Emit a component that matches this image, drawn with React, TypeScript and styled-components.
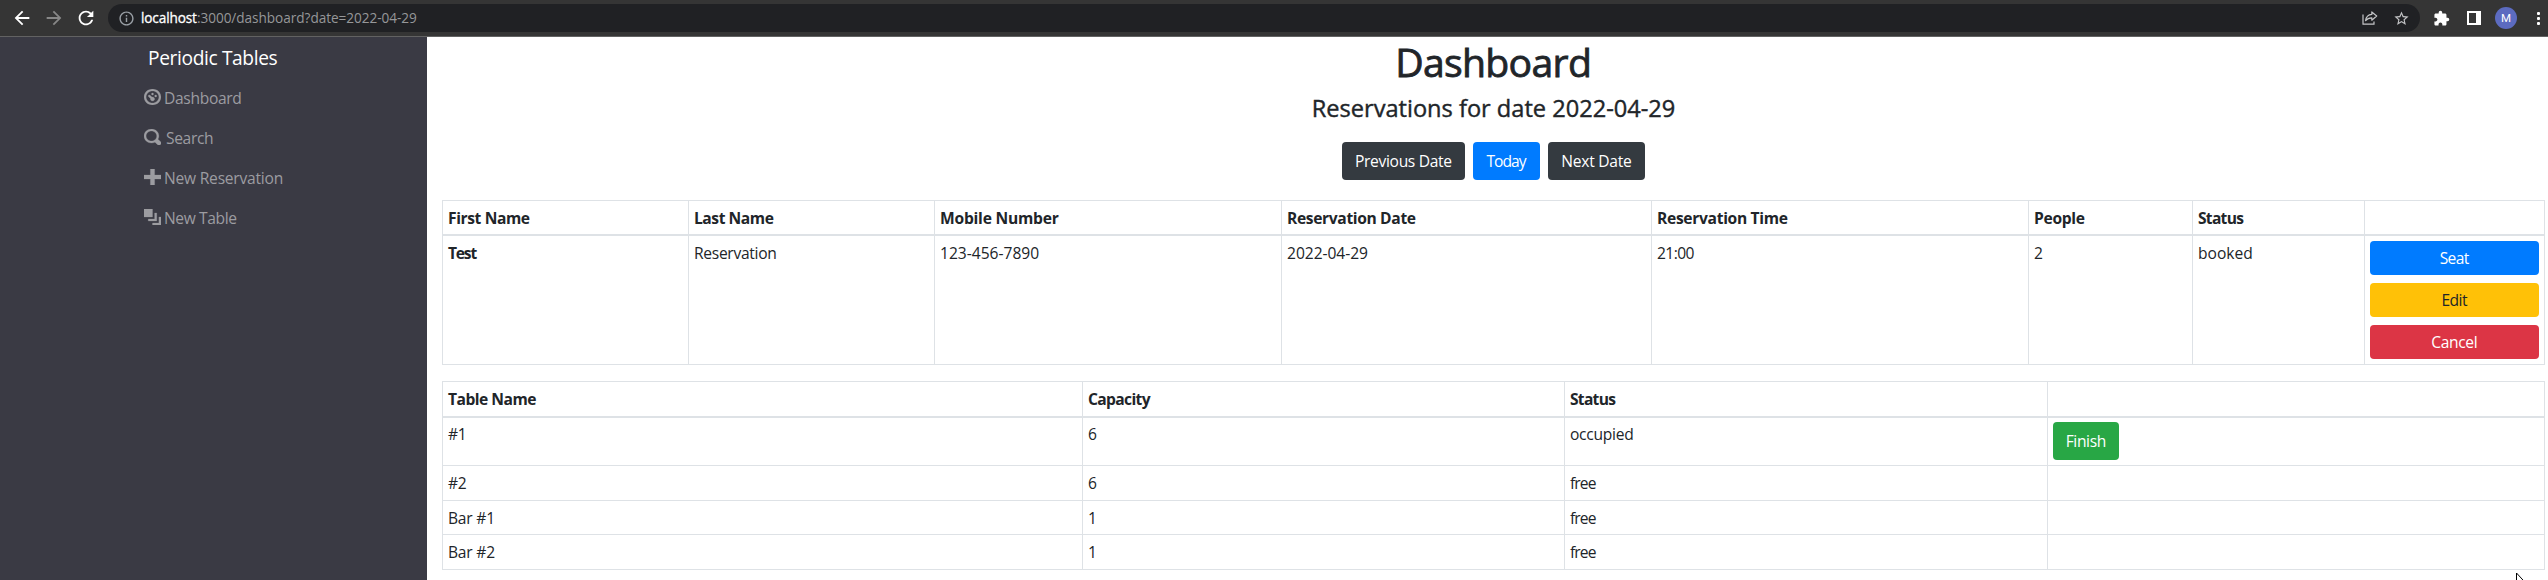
import React from "react";
import styled, { createGlobalStyle, css } from "styled-components";
import { MdArrowBack, MdArrowForward, MdRefresh, MdInfoOutline, MdStarOutline, MdExtension } from "react-icons/md";

const GlobalStyle = createGlobalStyle`
  *, *::before, *::after { box-sizing: border-box; }
  body {
    margin: 0;
    background: #fff;
    color: #212529;
    font: 400 15.6px/24px "Open Sans", "Noto Sans", sans-serif;
    overflow: hidden;
  }
`;

const Page = styled.div`
  position: relative;
  display: flex;
  flex-direction: column;
  height: 580px;
  overflow: hidden;
`;

const Track = styled.span<{ $t?: number }>`
  letter-spacing: ${(p) => p.$t ?? 0}px;
  margin-right: ${(p) => -(p.$t ?? 0)}px;
  white-space: nowrap;
`;

/* Browser toolbar */
const Toolbar = styled.header`
  display: flex;
  align-items: center;
  flex: none;
  height: 37px;
  padding: 0 5px 0 11px;
  background: #353535;
  border-bottom: 1px solid #626262;
  color: #fff;
  svg { display: block; flex: none; }
`;

const NavButtons = styled.div`
  display: flex;
  gap: 10px;
  width: 97px;
  svg:nth-child(2) { color: #878787; }
`;

const AddressBar = styled.div`
  display: flex;
  align-items: center;
  flex: 1;
  height: 28px;
  padding: 0 10px;
  border-radius: 14px;
  background: #202124;
  color: #9aa0a6;
`;

const Url = styled.div`
  flex: 1;
  margin-left: 6px;
  font-size: 13.6px;
  line-height: 20px;
  color: #969799;
  b { font-weight: 400; color: #fff; -webkit-text-stroke: 0.3px #fff; }
`;

const AddressActions = styled.div`
  display: flex;
  align-items: center;
  gap: 15px;
  color: #c3c4c6;
`;

const Extensions = styled.div`
  display: flex;
  align-items: center;
  height: 28px;
  width: 112px;
  margin-left: 11px;
  padding-left: 2px;
`;

const PanelIcon = styled.span`
  width: 14px;
  height: 14px;
  margin-left: 17px;
  border: solid #fff;
  border-width: 2px 5px 2px 2px;
`;

const Avatar = styled.span`
  width: 22px;
  height: 22px;
  margin-left: 14px;
  border-radius: 50%;
  background: #5c6bc0;
  font: 400 11.5px/22px Roboto, sans-serif;
  text-align: center;
`;

const Dots = styled.span`
  display: grid;
  gap: 2px;
  margin-left: 20px;
  i { width: 3px; height: 3px; border-radius: 1px; background: #fff; }
`;

/* Page shell */
const Shell = styled.div`
  display: flex;
  flex: 1;
`;

const Sidebar = styled.nav`
  width: 427px;
  flex: none;
  padding: 6px 0 0 144px;
  background: #3a3a44;
  color: #9c9ca1;
`;

const Brand = styled.div`
  height: 35px;
  padding-left: 4px;
  font-size: 19.2px;
  line-height: 30px;
  color: #fff;
`;

const NavItem = styled.a<{ $gap: number }>`
  display: flex;
  gap: ${(p) => p.$gap}px;
  height: 40px;
  padding: 8px 0;
  svg {
    width: 17px;
    height: 16px;
    margin-top: 3px;
    fill: currentColor;
    stroke: currentColor;
    stroke-width: 0.12;
  }
`;

const Main = styled.main`
  flex: 1;
  padding: 1px 3px 0 15px;
`;

const Title = styled.h1`
  margin: 0 0 8px;
  font-size: 39.2px;
  font-weight: 500;
  line-height: 48px;
  text-align: center;
  -webkit-text-stroke: 0.8px #212529;
`;

const Subtitle = styled.h4`
  margin: 0;
  height: 48px;
  font-size: 23.6px;
  font-weight: 500;
  line-height: 29px;
  text-align: center;
  -webkit-text-stroke: 0.4px #212529;
`;

const tones = {
  dark: "#343a40",
  primary: "#007bff",
  warning: "#ffc107",
  danger: "#dc3545",
  success: "#28a745",
};

const Button = styled.button<{ $tone: keyof typeof tones; $width?: number; $block?: boolean }>`
  display: flex;
  align-items: center;
  justify-content: center;
  height: 38px;
  width: ${(p) => p.$width}px;
  padding: 0;
  border: 0;
  border-radius: 4px;
  background: ${(p) => tones[p.$tone]};
  color: ${(p) => (p.$tone === "warning" ? "#212529" : "#fff")};
  font: inherit;
  ${(p) => p.$block && css`
    width: 169px;
    height: 34px;
  `}
`;

const DateNav = styled.div`
  display: flex;
  justify-content: center;
  gap: 8px;
  margin-bottom: 20px;
`;

const Actions = styled.div`
  display: flex;
  flex-direction: column;
  gap: 8px;
`;

const Table = styled.table`
  width: 2103px;
  table-layout: fixed;
  border-collapse: separate;
  border-spacing: 0;
  border: solid #dee2e6;
  border-width: 1px 0 0 1px;
  margin-bottom: 16px;
  th, td {
    padding: 5px 0 0 5px;
    border: solid #dee2e6;
    border-width: 0 1px 1px 0;
    text-align: left;
    vertical-align: top;
  }
  th { font-weight: 700; }
  thead th { border-bottom-width: 2px; }
`;

const Row = styled.tr<{ $h: number; $top?: number }>`
  height: ${(p) => p.$h}px;
  && > td, && > th { padding-top: ${(p) => p.$top ?? 5}px; }
`;

const Cursor = styled.svg`
  position: absolute;
  left: 2515px;
  top: 572px;
`;

const links = [
  { label: "Dashboard", t: -0.32, gap: 3, d: "M4 0c-2.2 0-4 1.8-4 4s1.8 4 4 4 4-1.8 4-4-1.8-4-4-4zm0 1c1.66 0 3 1.34 3 3s-1.34 3-3 3-3-1.34-3-3 1.34-3 3-3zm0 1c-.28 0-.5.22-.5.5s.22.5.5.5.5-.22.5-.5-.22-.5-.5-.5zm-1.66 1a.5.5 0 0 0-.19.84l.91.91c-.02.08-.06.16-.06.25 0 .55.45 1 1 1s1-.45 1-1-.45-1-1-1c-.09 0-.17.04-.25.06l-.91-.91a.5.5 0 0 0-.5-.15zm3.16 0c-.28 0-.5.22-.5.5s.22.5.5.5.5-.22.5-.5-.22-.5-.5-.5z" },
  { label: "Search", t: -0.35, gap: 5, d: "M3.5 0c-1.93 0-3.5 1.57-3.5 3.5s1.57 3.5 3.5 3.5c.59 0 1.17-.14 1.66-.41a1 1 0 0 0 .13.13l1 1a1.02 1.02 0 1 0 1.44-1.44l-1-1a1 1 0 0 0-.16-.13c.27-.49.44-1.06.44-1.66 0-1.93-1.55-3.5-3.5-3.5zm0 1c1.39 0 2.5 1.11 2.5 2.5 0 .66-.24 1.27-.66 1.72-.01.01-.02.02-.03.03a1 1 0 0 0-.13.13c-.44.4-1.04.63-1.69.63-1.39 0-2.5-1.11-2.5-2.5s1.11-2.5 2.5-2.5z" },
  { label: "New Reservation", t: -0.23, gap: 3, d: "M3 0v3h-3v2h3v3h2v-3h3v-2h-3v-3h-2z" },
  { label: "New Table", t: -0.38, gap: 3, d: "M0 0v4h4v-4h-4zm5 2v3h-3v1h4v-4h-1zm2 2v3h-3v1h4v-4h-1z" },
];

const reservationHead: [string, number, number][] = [
  ["First Name", -0.39, 246],
  ["Last Name", -0.44, 246],
  ["Mobile Number", -0.22, 347],
  ["Reservation Date", -0.35, 370],
  ["Reservation Time", -0.31, 377],
  ["People", -0.3, 164],
  ["Status", -0.72, 172],
  ["", 0, 180],
];

const reservation: [string, number][] = [
  ["Reservation", -0.3],
  ["123-456-7890", 0],
  ["2022-04-29", -0.04],
  ["21:00", -0.6],
  ["2", 0],
  ["booked", 0],
];

const tableHead: [string, number, number][] = [
  ["Table Name", -0.5, 640],
  ["Capacity", -0.65, 482],
  ["Status", -0.72, 483],
  ["", 0, 497],
];

const tables = [
  { name: "#1", capacity: 6, occupied: true, h: 48 },
  { name: "#2", capacity: 6, occupied: false, h: 35 },
  { name: "Bar #1", capacity: 1, occupied: false, h: 34 },
  { name: "Bar #2", capacity: 1, occupied: false, h: 35 },
];

function Columns({ head }: { head: [string, number, number][] }) {
  return <colgroup>{head.map(([, , w], i) => <col key={i} width={w} />)}</colgroup>;
}

function HeadRow({ head, h }: { head: [string, number, number][]; h: number }) {
  return (
    <thead>
      <Row $h={h}>
        {head.map(([label, t], i) => <th key={i}><Track $t={t}>{label}</Track></th>)}
      </Row>
    </thead>
  );
}

export default function App() {
  return (
    <Page>
      <GlobalStyle />
      <Toolbar>
        <NavButtons>
          <MdArrowBack size={22} />
          <MdArrowForward size={22} />
          <MdRefresh size={22} />
        </NavButtons>
        <AddressBar>
          <MdInfoOutline size={17} />
          <Url>
            <b><Track $t={-0.13}>localhost</Track></b>
            <Track $t={-0.04}>:3000/dashboard?date=2022-04-29</Track>
          </Url>
          <AddressActions>
            <svg width="16" height="14" viewBox="0 0 16 14" fill="none" stroke="currentColor" strokeWidth="1.2">
              <path d="M1 3.5v9.7h11v-2.6" />
              <path d="M9.8 1v2.4C6 3.7 4.1 6 3.6 9.6c1.5-2 3.4-2.8 6.2-2.8v2.4L14.7 5z" strokeLinejoin="round" />
            </svg>
            <MdStarOutline size={17} />
          </AddressActions>
        </AddressBar>
        <Extensions>
          <MdExtension size={17} />
          <PanelIcon />
          <Avatar>M</Avatar>
          <Dots><i /><i /><i /></Dots>
        </Extensions>
      </Toolbar>
      <Shell>
        <Sidebar>
          <Brand><Track $t={-0.38}>Periodic Tables</Track></Brand>
          {links.map((l) => (
            <NavItem key={l.label} $gap={l.gap}>
              <svg viewBox="0 0 8 8" preserveAspectRatio="none"><path d={l.d} /></svg>
              <Track $t={l.t}>{l.label}</Track>
            </NavItem>
          ))}
        </Sidebar>
        <Main>
          <Title><Track $t={-0.69}>Dashboard</Track></Title>
          <Subtitle>Reservations for date 2022-04-29</Subtitle>
          <DateNav>
            <Button $tone="dark" $width={123}><Track $t={-0.33}>Previous Date</Track></Button>
            <Button $tone="primary" $width={67}><Track $t={-0.95}>Today</Track></Button>
            <Button $tone="dark" $width={97}><Track $t={-0.27}>Next Date</Track></Button>
          </DateNav>
          <Table>
            <Columns head={reservationHead} />
            <HeadRow head={reservationHead} h={35} />
            <tbody>
              <Row $h={129}>
                <th><Track $t={-1.2}>Test</Track></th>
                {reservation.map(([value, t]) => <td key={value}><Track $t={t}>{value}</Track></td>)}
                <td>
                  <Actions>
                    <Button $tone="primary" $block><Track $t={-0.6}>Seat</Track></Button>
                    <Button $tone="warning" $block><Track $t={-0.55}>Edit</Track></Button>
                    <Button $tone="danger" $block><Track $t={-0.36}>Cancel</Track></Button>
                  </Actions>
                </td>
              </Row>
            </tbody>
          </Table>
          <Table>
            <Columns head={tableHead} />
            <HeadRow head={tableHead} h={36} />
            <tbody>
              {tables.map((row) => (
                <Row key={row.name} $h={row.h} $top={row.occupied ? 4 : 5}>
                  <td><Track $t={-0.2}>{row.name}</Track></td>
                  <td>{row.capacity}</td>
                  <td><Track $t={row.occupied ? -0.27 : -0.9}>{row.occupied ? "occupied" : "free"}</Track></td>
                  <td>
                    {row.occupied && (
                      <Button $tone="success" $width={66}><Track $t={-0.35}>Finish</Track></Button>
                    )}
                  </td>
                </Row>
              ))}
            </tbody>
          </Table>
        </Main>
      </Shell>
      <Cursor width="14" height="20" viewBox="0 0 14 20">
        <path d="M1.5 1v15l3.5-3.3 2.4 5.3 2-1-2.4-5h4.6z" fill="#fff" stroke="#000" />
      </Cursor>
    </Page>
  );
}
